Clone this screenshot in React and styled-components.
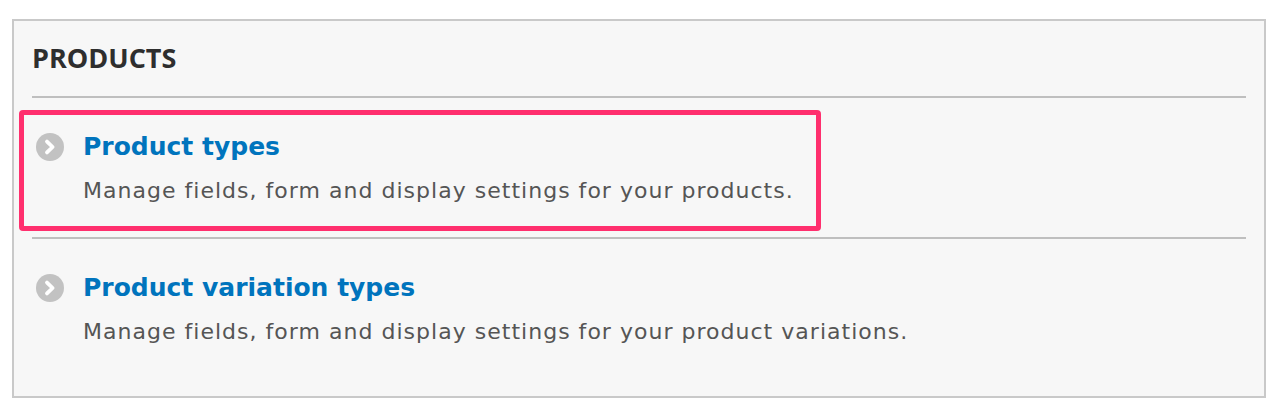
import React from 'react'
import styled, { createGlobalStyle } from 'styled-components'

const GlobalStyle = createGlobalStyle`
    html, body {
        margin: 0;
        padding: 0;
        background: #ffffff;
    }
    body {
        font-family: 'DejaVu Sans', 'Liberation Sans', sans-serif;
    }
`

const Page = styled.div`
    padding: 19px 14px 20px 12px;
`

const Panel = styled.section`
    border: 2px solid #c9c9c9;
    background: #f7f7f7;
    padding: 19px 18px 18px;
`

const PanelTitle = styled.h3`
    margin: 0;
    padding: 0 0 20px;
    border-bottom: 2px solid #bfbfbf;
    font-family: 'Open Sans', 'DejaVu Sans', sans-serif;
    font-size: 27px;
    line-height: 36px;
    font-weight: 700;
    color: #2e2e2e;
    text-transform: uppercase;
`

const List = styled.ul`
    list-style: none;
    margin: 0;
    padding: 0;
`

const Item = styled.li`
    padding: 34px 0 32px 4px;
    border-bottom: ${(props) => (props.$last ? 'none' : '2px solid #bfbfbf')};
`

const Row = styled.div`
    position: relative;
    display: inline-flex;
    align-items: flex-start;
    gap: 19px;

    ${(props) =>
        props.$highlight &&
        `
        &::after {
            content: '';
            position: absolute;
            top: -22px;
            right: -27px;
            bottom: -26px;
            left: -17px;
            border: 5px solid #ff2f6e;
            border-radius: 4px;
            pointer-events: none;
        }
    `}
`

const Bullet = styled.svg`
    flex: none;
    width: 28px;
    height: 28px;
    margin-top: 1px;
`

const Text = styled.div`
    display: flex;
    flex-direction: column;
    gap: 15px;
`

const Title = styled.a`
    font-family: 'DejaVu Sans', sans-serif;
    font-size: 25px;
    line-height: 30px;
    font-weight: 700;
    color: #0074bd;
    text-decoration: none;
`

const Description = styled.div`
    font-family: 'DejaVu Sans', sans-serif;
    font-size: 22px;
    line-height: 28px;
    letter-spacing: 1.02px;
    color: #555555;
`

const ArrowIcon = () => (
    <Bullet viewBox="0 0 28 28">
        <circle cx="14" cy="14" r="14" fill="#c2c2c2" />
        <path
            d="M11 8.6 L16.6 14 L11 19.4"
            fill="none"
            stroke="#ffffff"
            strokeWidth="3.8"
            strokeLinecap="round"
            strokeLinejoin="round"
        />
    </Bullet>
)

const links = [
    {
        title: 'Product types',
        description: 'Manage fields, form and display settings for your products.',
        highlight: true,
    },
    {
        title: 'Product variation types',
        description: 'Manage fields, form and display settings for your product variations.',
        highlight: false,
    },
]

const App = () => {
    return (
        <>
            <GlobalStyle />
            <Page>
                <Panel>
                    <PanelTitle>Products</PanelTitle>
                    <List>
                        {links.map((link, i) => (
                            <Item key={link.title} $last={i === links.length - 1}>
                                <Row $highlight={link.highlight}>
                                    <ArrowIcon />
                                    <Text>
                                        <Title href="#">{link.title}</Title>
                                        <Description>{link.description}</Description>
                                    </Text>
                                </Row>
                            </Item>
                        ))}
                    </List>
                </Panel>
            </Page>
        </>
    )
}

export default App
